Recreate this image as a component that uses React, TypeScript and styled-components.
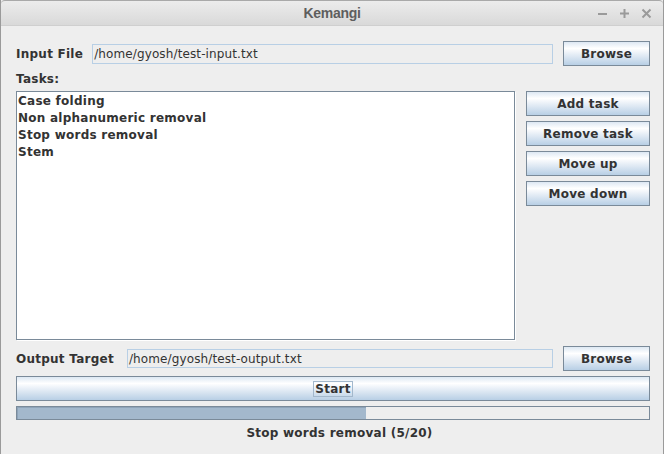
import React from "react";
import styled, { createGlobalStyle } from "styled-components";

const Global = createGlobalStyle`
  html, body { margin: 0; padding: 0; background: #eeeeee; }
  body { font-family: "DejaVu Sans", "Liberation Sans", sans-serif; }
`;

const Window = styled.div`
  width: 664px;
  height: 454px;
  box-sizing: border-box;
  background: #eeeeee;
  border-left: 1px solid #9a9a9a;
  border-right: 1px solid #9a9a9a;
  display: flex;
  flex-direction: column;
  overflow: hidden;
`;

const TitleBar = styled.div`
  height: 26px;
  flex: none;
  box-sizing: border-box;
  border-top: 1px solid #a9a9a9;
  border-radius: 4px 4px 0 0;
  background: linear-gradient(#ececec, #d9d9d9);
  border-bottom: 1px solid #cfcfcf;
  display: grid;
  grid-template-columns: 1fr auto 1fr;
  align-items: center;
`;

const Title = styled.div`
  grid-column: 2;
  font-family: "Liberation Sans", Arial, sans-serif;
  font-weight: bold;
  font-size: 14px;
  color: #5e5e5e;
  letter-spacing: -0.3px;
`;

const Controls = styled.div`
  grid-column: 3;
  justify-self: end;
  display: flex;
  align-items: center;
  gap: 11px;
  padding-right: 11px;
`;

const Content = styled.div`
  flex: 1;
  display: flex;
  flex-direction: column;
  padding: 15px 13px 0 15px;
`;

const Row = styled.div<{ $mt?: number }>`
  display: flex;
  align-items: center;
  height: 25px;
  margin-top: ${(p) => p.$mt ?? 0}px;
`;

const Bold = `
  font-size: 12px;
  font-weight: bold;
  color: #333333;
  letter-spacing: 0.25px;
  white-space: nowrap;
`;

const Label = styled.div<{ $gap: number }>`
  ${Bold}
  margin-right: ${(p) => p.$gap}px;
`;

const Field = styled.div<{ $h: number }>`
  flex: 1;
  height: ${(p) => p.$h}px;
  box-sizing: border-box;
  border: 1px solid #b8cfe5;
  background: #eeeeee;
  font-size: 12px;
  letter-spacing: 0.12px;
  color: #333333;
  padding-left: 1px;
  display: flex;
  align-items: center;
  white-space: nowrap;
`;

const Button = styled.div<{ $w?: number }>`
  ${Bold}
  box-sizing: border-box;
  height: 25px;
  width: ${(p) => (p.$w ? `${p.$w}px` : "auto")};
  border: 1px solid #7a8a99;
  background: linear-gradient(#dde8f3 0%, #ffffff 28%, #eef3f9 45%, #b8cfe5 100%);
  display: flex;
  align-items: center;
  justify-content: center;
`;

const SideButton = styled(Button)`
  margin-left: 10px;
  flex: none;
`;

const TasksLabel = styled.div`
  ${Bold}
  height: 25px;
  display: flex;
  align-items: center;
`;

const Middle = styled.div`
  display: flex;
  gap: 11px;
  height: 249px;
`;

const List = styled.div`
  flex: 1;
  box-sizing: border-box;
  border: 1px solid #7a8a99;
  box-shadow: 1px 1px 0 #ffffff;
  background: #ffffff;
  padding: 1px 1px 0;
`;

const ListItem = styled.div`
  ${Bold}
  height: 17px;
  line-height: 17px;
`;

const ButtonColumn = styled.div`
  width: 124px;
  display: flex;
  flex-direction: column;
  gap: 5px;
`;

const WideButton = styled(Button)`
  margin-top: 5px;
`;

const Focus = styled.span`
  border: 1px solid #a3b8cc;
  padding: 0 1px;
  line-height: 14px;
`;

const Progress = styled.div`
  margin-top: 5px;
  height: 14px;
  box-sizing: border-box;
  border: 1px solid #7a8a99;
  background: #eeeeee;
  display: flex;
`;

const Fill = styled.div`
  height: 100%;
  background: #a3b8cc;
  box-shadow: inset 1px 1px 0 #8ea3b8;
`;

const Status = styled.div`
  ${Bold}
  margin-top: 6px;
  height: 14px;
  line-height: 14px;
  text-align: center;
  padding-left: 13px;
`;

const Icon = ({ kind }: { kind: "min" | "max" | "close" }) => (
  <svg width="11" height="11" viewBox="0 0 11 11">
    {kind === "min" && <path d="M1 6h9" stroke="#9a9a9a" strokeWidth="2" />}
    {kind === "max" && <path d="M1 5.5h9M5.5 1v9" stroke="#9a9a9a" strokeWidth="2" />}
    {kind === "close" && <path d="M1.5 1.5l8 8M9.5 1.5l-8 8" stroke="#9a9a9a" strokeWidth="2" />}
  </svg>
);

const tasks = ["Case folding", "Non alphanumeric removal", "Stop words removal", "Stem"];

export default function App() {
  const progress = 5 / 20;
  return (
    <>
      <Global />
      <Window>
        <TitleBar>
          <Title>Kemangi</Title>
          <Controls>
            <Icon kind="min" />
            <Icon kind="max" />
            <Icon kind="close" />
          </Controls>
        </TitleBar>
        <Content>
          <Row>
            <Label $gap={9}>Input File</Label>
            <Field $h={20}>/home/gyosh/test-input.txt</Field>
            <SideButton $w={87}>Browse</SideButton>
          </Row>
          <TasksLabel>Tasks:</TasksLabel>
          <Middle>
            <List>
              {tasks.map((t) => (
                <ListItem key={t}>{t}</ListItem>
              ))}
            </List>
            <ButtonColumn>
              <Button>Add task</Button>
              <Button>Remove task</Button>
              <Button>Move up</Button>
              <Button>Move down</Button>
            </ButtonColumn>
          </Middle>
          <Row $mt={6}>
            <Label $gap={13}>Output Target</Label>
            <Field $h={19}>/home/gyosh/test-output.txt</Field>
            <SideButton $w={87}>Browse</SideButton>
          </Row>
          <WideButton>
            <Focus>Start</Focus>
          </WideButton>
          <Progress>
            <Fill style={{ width: `${progress * 100 + 30.2}%` }} />
          </Progress>
          <Status>Stop words removal (5/20)</Status>
        </Content>
      </Window>
    </>
  );
}
